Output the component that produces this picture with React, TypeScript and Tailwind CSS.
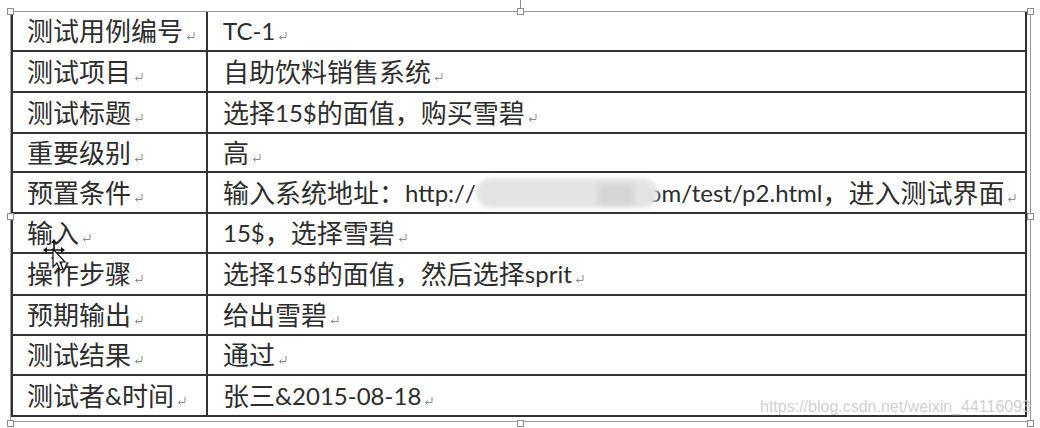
import type { ReactNode } from 'react';

const CJK = /([\u3000-\u303f\u4e00-\u9fff\uff00-\uffef]+)/;

// Word 用 Calibri + 雅黑，这里拉丁字母用 Lato 24px，中文 26px 让字宽对上
function Mixed({ text }: { text: string }) {
  return (
    <>
      {text.split(CJK).map((part, i) =>
        part === '' ? null : CJK.test(part) ? (
          <span key={i} className="text-[26px]">{part}</span>
        ) : (
          <span key={i} className="text-[24px]">{part}</span>
        ),
      )}
    </>
  );
}

function ParaMark() {
  return (
    <svg width="11" height="10" viewBox="0 0 11 10" className="ml-[2px] mt-[10px] shrink-0">
      <path d="M9 1 V6.5 H2.5" fill="none" stroke="#8a8a8a" strokeWidth="1" />
      <path d="M4.5 4.5 L2.5 6.5 L4.5 8.5" fill="none" stroke="#8a8a8a" strokeWidth="1" />
    </svg>
  );
}

function Handle({ className }: { className: string }) {
  return <div className={`absolute w-[7px] h-[7px] bg-white border border-[#8c8c8c] ${className}`} />;
}

function Blurred() {
  return (
    <span className="inline-block relative z-10 -mr-[10px] w-[182px] h-[30px] rounded-full bg-[#e4e4e4] blur-[2px] shrink-0">
      <span className="absolute right-[24px] top-[6px] w-[36px] h-[22px] bg-[#d6d6d6]" />
    </span>
  );
}

const rows: { label: string; value: ReactNode; h: string }[] = [
  { label: '测试用例编号', value: <Mixed text="TC-1" />, h: 'h-[40px]' },
  { label: '测试项目', value: <Mixed text="自助饮料销售系统" />, h: 'h-[41px]' },
  { label: '测试标题', value: <Mixed text="选择 15$的面值，购买雪碧" />, h: 'h-[41px]' },
  { label: '重要级别', value: <Mixed text="高" />, h: 'h-[39px]' },
  {
    label: '预置条件',
    value: (
      <>
        <Mixed text="输入系统地址：http:/" />
        <span className="text-[24px]">/</span>
        <Blurred />
        <Mixed text="om/test/p2.html，进入测试界面" />
      </>
    ),
    h: 'h-[41px]',
  },
  { label: '输入', value: <Mixed text="15$，选择雪碧" />, h: 'h-[40px]' },
  { label: '操作步骤', value: <Mixed text="选择 15$的面值，然后选择 sprit" />, h: 'h-[42px]' },
  { label: '预期输出', value: <Mixed text="给出雪碧" />, h: 'h-[40px]' },
  { label: '测试结果', value: <Mixed text="通过" />, h: 'h-[40px]' },
  { label: '测试者&时间', value: <Mixed text="张三&2015-08-18" />, h: 'h-[41px]' },
];

export default function App() {
  return (
    <div className="relative w-[1040px] h-[428px] overflow-hidden bg-white text-[#2d2d2d] font-['Lato','Noto_Sans_CJK_SC',sans-serif]">
      {/* selection frame */}
      <div className="ml-[10px] mt-[11px] w-[1021px] h-[411px] border border-[#9a9a9a]">
        <div className="w-[1016px] flex flex-col border-l-2 border-r-2 border-[#333]">
          {rows.map((row) => (
            <div key={row.label} className={`flex ${row.h} border-b-2 border-[#333]`}>
              <div className="w-[195px] shrink-0 flex items-center pl-[14px] border-r-2 border-[#333] whitespace-nowrap leading-none">
                <Mixed text={row.label} />
                <ParaMark />
              </div>
              <div className="flex-1 flex items-center pl-[15px] whitespace-nowrap leading-none">
                {row.value}
                <ParaMark />
              </div>
            </div>
          ))}
        </div>
      </div>

      {/* resize handles */}
      <div className="absolute left-[520px] top-0 w-px h-[8px] bg-[#8c8c8c]" />
      <Handle className="left-[7px] top-[8px]" />
      <Handle className="left-[517px] top-[8px]" />
      <Handle className="left-[1027px] top-[8px]" />
      <Handle className="left-[7px] top-[213px]" />
      <Handle className="left-[1027px] top-[213px]" />
      <Handle className="left-[7px] top-[420px]" />
      <Handle className="left-[517px] top-[420px]" />
      <Handle className="left-[1027px] top-[420px]" />

      {/* mouse cursor */}
      <svg className="absolute left-[42px] top-[239px]" width="28" height="34" viewBox="0 0 28 34">
        <g stroke="#111" strokeWidth="1.6" fill="none">
          <path d="M12 2 V20 M3 11 H21" />
        </g>
        <path d="M12 0 L9 4 H15 Z M12 22 L9 18 H15 Z M1 11 L5 8 V14 Z M23 11 L19 8 V14 Z" fill="#111" />
        <path d="M11 10 L11 28 L15 24 L18 31 L21 30 L18 23 L23 23 Z" fill="#fff" stroke="#111" strokeWidth="1.2" />
      </svg>

      {/* watermark */}
      <div className="absolute left-[760px] top-[399px] text-[16px] leading-none font-['Liberation_Sans',sans-serif] text-[#c4c4c4]/80 whitespace-nowrap">
        https://blog.csdn.net/weixin_44116093
      </div>
    </div>
  );
}
